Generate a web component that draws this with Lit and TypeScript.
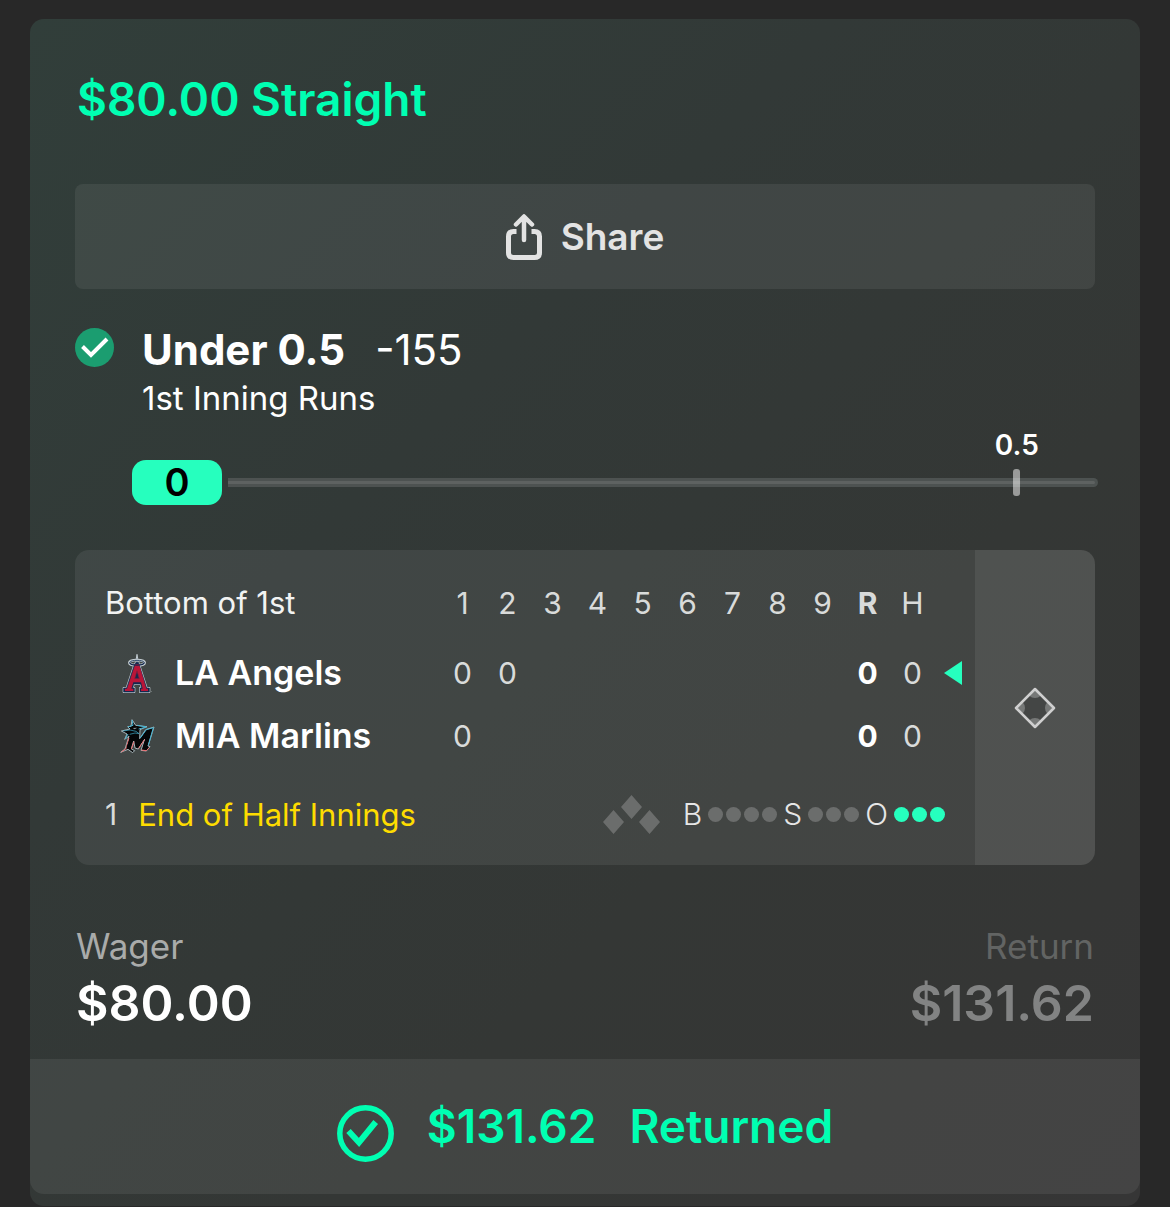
import { LitElement, css, html, svg } from "lit";
import { customElement, property } from "lit/decorators.js";
import { classMap } from "lit/directives/class-map.js";

type Team = {
  name: string;
  logo: unknown;
  innings: string[];
  runs: number;
  hits: number;
  batting: boolean;
};

const angelsLogo = html`
  <svg class="logo" viewBox="0 0 102 120" aria-hidden="true">
    <g stroke-linejoin="round">
      <path d="M48 4 L51 22 H45 Z" fill="#14294f" stroke="#c3ccd0" stroke-width="3" />
      <ellipse cx="48" cy="29" rx="23" ry="8" fill="none" stroke="#c3ccd0" stroke-width="8" />
      <path
        d="M45 28 H52 L77 105 H85 V117 H57 V105 H62 L59 93 H38 L35 105 H40 V117 H8 V105 H17 L39 39 Z"
        fill="#14294f"
        stroke="#c3ccd0"
        stroke-width="6"
      />
      <path
        d="M45 28 H52 L77 105 H85 V117 H57 V105 H62 L59 93 H38 L35 105 H40 V117 H8 V105 H17 L39 39 Z"
        fill="#14294f"
        stroke="#14294f"
        stroke-width="2"
      />
      <path
        d="M43 33 H54 L76 107 H81 V114 H60 V107 H65 L60 88 H37 L31 107 H37 V114 H12 V107 H18 Z"
        fill="#b91538"
      />
      <path d="M48 53 L55 77 H41 Z" fill="#14294f" stroke="#8f1d39" stroke-width="2" />
      <path d="M26 28 C28 39 68 39 70 28" fill="none" stroke="#14294f" stroke-width="4" />
      <path d="M26 28 C29 20 67 20 70 28" fill="none" stroke="#304969" stroke-width="3" />
      <circle cx="92" cy="116" r="1" fill="#c3ccd0" />
    </g>
  </svg>
`;

const marlinsLogo = html`
  <svg class="logo" viewBox="0 -4 108 112" aria-hidden="true">
    <g stroke-linejoin="round">
      <path
        d="M2 101 L15 91 L27 52 L14 62 L21 46 L4 37 L30 31 L23 24 L33 23 L36 3 L47 20 L81 24 L60 33 L59 60 L77 33 L102 25 L97 41 L84 82 L90 84 L79 97 L63 95 L74 61 L55 91 L45 88 L41 67 L34 91 L44 96 L38 102 L24 92 Z"
        fill="#050607"
        stroke="#a6b5ba"
        stroke-width="3"
      />
      <path d="M36 4 L39 20 L24 25 M52 20 L79 25 L56 31 M61 58 L79 33 L100 27 L85 80 M16 60 L24 46" fill="none" stroke="#43b4d3" stroke-width="3" />
      <path d="M4 100 L18 90 L27 58 M34 91 L42 69 M56 89 L74 62 M64 94 L79 96 L89 86" fill="none" stroke="#ee6f72" stroke-width="3" />
      <path d="M9 37 L30 34 L48 38 L57 45 L45 43 L29 47" fill="none" stroke="#43b4d3" stroke-width="2" />
      <path d="M38 28 L52 27 L44 32 Z" fill="#82949c" />
      <path d="M36 52 L23 88 M48 50 L53 80 L83 40 M87 40 L73 86" fill="none" stroke="#050607" stroke-width="8" />
    </g>
  </svg>
`;

@customElement("stat-tracker")
export class StatTracker extends LitElement {
  @property({ type: Number }) value = 0;
  @property({ type: Number }) line = 0.5;

  static styles = css`
    :host {
      display: block;
    }
    .tracker {
      position: relative;
      display: flex;
      align-items: center;
      gap: 6px;
      height: 45px;
    }
    .pill {
      width: 90px;
      height: 45px;
      border-radius: 14px;
      background: #26ffbe;
      color: #000;
      font-size: 38px;
      font-weight: 600;
      line-height: 45px;
      text-align: center;
    }
    .track {
      flex: 1;
      height: 9px;
      border-radius: 0 5px 5px 0;
      box-sizing: border-box;
      padding: 3px 3px 3px 0;
      background: #4d5251;
    }
    .track-line {
      height: 3px;
      background: #5e6261;
      border-radius: 0 2px 2px 0;
    }
    .target {
      position: absolute;
      bottom: 9px;
      display: flex;
      flex-direction: column;
      align-items: center;
      gap: 9px;
      transform: translateX(-50%);
      color: #fff;
      font-size: 28px;
      font-weight: 600;
      line-height: 30px;
    }
    .tick {
      width: 7px;
      height: 27px;
      border-radius: 3px;
      background: rgba(255, 255, 255, 0.5);
    }
  `;

  render() {
    // the scale runs a little past the line
    const left = 91.6 * (this.line / 0.5);
    return html`
      <div class="tracker" role="meter" aria-label="Runs" aria-valuemin="0" aria-valuemax=${this.line} aria-valuenow=${this.value}>
        <span class="pill">${this.value}</span>
        <div class="track"><div class="track-line"></div></div>
        <div class="target" style="left: ${left}%">
          <span>${this.line}</span>
          <span class="tick"></span>
        </div>
      </div>
    `;
  }
}

@customElement("score-board")
export class ScoreBoard extends LitElement {
  @property({ attribute: false }) teams: Team[] = [];

  static styles = css`
    :host {
      display: flex;
      border-radius: 14px;
      overflow: hidden;
      background: rgba(255, 255, 255, 0.07);
    }
    .main {
      flex: 1;
      min-width: 0;
      padding-top: 14px;
    }
    table {
      width: 100%;
      table-layout: fixed;
      border-collapse: collapse;
      font-size: 30px;
      line-height: 36px;
      color: #d9dbda;
    }
    th,
    td {
      padding: 0;
      font-weight: 400;
      text-align: center;
      vertical-align: middle;
    }
    .inning {
      width: 45px;
    }
    .arrow {
      width: 40px;
    }
    thead tr {
      height: 77px;
    }
    tbody tr {
      height: 63px;
    }
    .period {
      padding-left: 30px;
      font-size: 31px;
      text-align: left;
      color: #f2f3f2;
    }
    .team {
      display: flex;
      align-items: center;
      gap: 19px;
      padding-left: 45px;
      font-size: 34px;
      font-weight: 600;
      color: #fff;
      white-space: nowrap;
    }
    .logo {
      display: block;
      width: 36px;
      height: 40px;
    }
    .runs {
      font-weight: 700;
    }
    td.runs {
      color: #fff;
    }
    .batting {
      display: block;
      width: 18px;
      height: 24px;
      margin-left: 9px;
      fill: #26ffbe;
    }
    .status {
      display: flex;
      align-items: center;
      height: 60px;
      padding: 17px 30px 21px;
      font-size: 30px;
      color: #d9dbda;
    }
    .play {
      flex: 1;
      margin-left: 21px;
      font-size: 31px;
      color: #fedc00;
    }
    .bases {
      width: 57px;
      height: 39px;
      margin-right: 23px;
      fill: #6b6d6c;
    }
    .count {
      display: flex;
      align-items: center;
      gap: 6px;
      font-weight: 300;
      color: #e6e6e6;
    }
    .dots {
      display: flex;
      gap: 3px;
    }
    .dot {
      width: 15px;
      height: 15px;
      border-radius: 50%;
      background: #6b6d6c;
    }
    .dot.on {
      background: #26ffbe;
    }
    .field {
      display: flex;
      align-items: center;
      justify-content: center;
      width: 120px;
      padding: 0;
      border: 0;
      background: rgba(255, 255, 255, 0.07);
      cursor: pointer;
    }
    .field svg {
      width: 42px;
      height: 42px;
    }
  `;

  dots(total: number, on: number) {
    return html`<span class="dots">
      ${Array.from({ length: total }, (_, i) => html`<span class=${classMap({ dot: true, on: i < on })}></span>`)}
    </span>`;
  }

  teamRow(team: Team) {
    return html`
      <tr>
        <th scope="row"><div class="team">${team.logo} ${team.name}</div></th>
        ${Array.from({ length: 9 }, (_, i) => html`<td>${team.innings[i] ?? ""}</td>`)}
        <td class="runs">${team.runs}</td>
        <td>${team.hits}</td>
        <td>
          ${team.batting
            ? html`<svg class="batting" viewBox="0 0 18 24" aria-hidden="true"><path d="M0 12 L18 0 V24 Z" /></svg>`
            : ""}
        </td>
      </tr>
    `;
  }

  render() {
    const corners = [
      [21, 3],
      [39, 21],
      [21, 39],
      [3, 21],
    ];
    return html`
      <div class="main">
        <table>
          <thead>
            <tr>
              <th class="period" scope="col">Bottom of 1st</th>
              ${[1, 2, 3, 4, 5, 6, 7, 8, 9].map((n) => html`<th class="inning" scope="col">${n}</th>`)}
              <th class="inning runs" scope="col">R</th>
              <th class="inning" scope="col">H</th>
              <td class="arrow"></td>
            </tr>
          </thead>
          <tbody>
            ${this.teams.map((team) => this.teamRow(team))}
          </tbody>
        </table>
        <div class="status">
          <span>1</span>
          <span class="play">End of Half Innings</span>
          <svg class="bases" viewBox="0 0 57 39" aria-hidden="true">
            <path d="M28.500 0 L39 12 L28.500 24 L18 12 Z M10.500 15 L21 27 L10.500 39 L0 27 Z M46.500 15 L57 27 L46.500 39 L36 27 Z" />
          </svg>
          <div class="count">
            <span>B</span>${this.dots(4, 0)} <span>S</span>${this.dots(3, 0)} <span>O</span>${this.dots(3, 3)}
          </div>
        </div>
      </div>
      <button class="field" type="button" aria-label="Field view">
        <svg viewBox="0 0 42 42" aria-hidden="true">
          <clipPath id="infield"><path d="M21 2 L40 21 L21 40 L2 21 Z" /></clipPath>
          <g clip-path="url(#infield)">
            <rect width="42" height="42" fill="#444645" />
            ${corners.map(([x, y]) => svg`<circle cx=${x} cy=${y} r="8" fill="#767877" />`)}
          </g>
          <path d="M21 2 L40 21 L21 40 L2 21 Z" fill="none" stroke="#cfcfcf" stroke-width="2.500" stroke-linejoin="round" />
        </svg>
      </button>
    `;
  }
}

@customElement("app-root")
export class AppRoot extends LitElement {
  teams: Team[] = [
    { name: "LA Angels", logo: angelsLogo, innings: ["0", "0"], runs: 0, hits: 0, batting: true },
    { name: "MIA Marlins", logo: marlinsLogo, innings: ["0"], runs: 0, hits: 0, batting: false },
  ];

  static styles = css`
    :host {
      display: block;
      box-sizing: border-box;
      min-height: 100vh;
      padding: 19px 30px 1px;
      background: #282828;
      color: #fff;
      font-family: Inter, "Liberation Sans", sans-serif;
    }
    .card {
      border-radius: 14px;
      padding-bottom: 12px;
      background: linear-gradient(135deg, #313e3a 0%, #323937 35%, #343735 65%, #353635 85%, #363636 100%);
    }
    .content {
      padding: 0 45px;
    }
    h1 {
      margin: 0;
      padding: 52px 2px 57px;
      font-size: 46px;
      font-weight: 600;
      line-height: 56px;
      color: #00ffb2;
    }
    .share {
      display: flex;
      align-items: center;
      justify-content: center;
      gap: 19px;
      width: 100%;
      height: 105px;
      padding: 0;
      border: 0;
      border-radius: 8px;
      background: rgba(255, 255, 255, 0.07);
      color: #e3e3e3;
      font: 600 37px/44px Inter, "Liberation Sans", sans-serif;
      cursor: pointer;
    }
    .share svg {
      width: 36px;
      height: 46px;
    }
    .pick {
      display: flex;
      gap: 28px;
      padding-top: 39px;
    }
    .badge {
      width: 39px;
      height: 39px;
    }
    h2 {
      display: flex;
      gap: 30px;
      margin: 0;
      font-size: 42px;
      font-weight: 700;
      line-height: 44px;
    }
    .odds {
      font-weight: 400;
    }
    .market {
      margin: 0;
      font-size: 33px;
      line-height: 52px;
    }
    stat-tracker {
      margin: 36px -3px 45px 57px;
    }
    .amounts {
      display: flex;
      justify-content: space-between;
      padding: 59px 1px 24px;
      margin: 0;
    }
    .returns {
      text-align: right;
    }
    dt {
      font-size: 35px;
      line-height: 44px;
      color: #a9abaa;
    }
    dd {
      margin: 0;
      padding-top: 3px;
      font-size: 50px;
      font-weight: 600;
      line-height: 64px;
    }
    .returns dt {
      color: #626463;
    }
    .returns dd {
      color: #828383;
    }
    .result {
      display: flex;
      align-items: flex-start;
      justify-content: center;
      gap: 33px;
      padding: 46px 0 32px;
      border-radius: 0 0 14px 14px;
      background: rgba(255, 255, 255, 0.07);
      color: #00ffb2;
      font-size: 46px;
      font-weight: 600;
      line-height: 42px;
    }
    .result svg {
      width: 57px;
      height: 57px;
    }
  `;

  render() {
    return html`
      <main class="card">
        <div class="content">
          <h1>$80.00 Straight</h1>
          <button class="share" type="button">
            <svg viewBox="0 0 36 46" fill="none" stroke="currentColor" stroke-linecap="round" stroke-linejoin="round" aria-hidden="true">
              <path stroke-width="5" stroke-linecap="butt" d="M10.500 17.500 H7.500 Q2.500 17.500 2.500 22.500 V38.500 Q2.500 43.500 7.500 43.500 H28.500 Q33.500 43.500 33.500 38.500 V22.500 Q33.500 17.500 28.500 17.500 H25.500" />
              <path stroke-width="4.500" d="M18 26 V3 M10 10.500 L18 2.500 L26 10.500" />
            </svg>
            Share
          </button>
          <section class="pick">
            <svg class="badge" viewBox="0 0 39 39" role="img" aria-label="Won">
              <circle cx="19.500" cy="19.500" r="19.500" fill="#1b9d70" />
              <path d="M7.500 18.500 L16 27 L32 11" fill="none" stroke="#fff" stroke-width="4" />
            </svg>
            <div>
              <h2>Under 0.5 <span class="odds">-155</span></h2>
              <p class="market">1st Inning Runs</p>
            </div>
          </section>
          <stat-tracker .value=${0} .line=${0.5}></stat-tracker>
          <score-board .teams=${this.teams}></score-board>
          <dl class="amounts">
            <div>
              <dt>Wager</dt>
              <dd>$80.00</dd>
            </div>
            <div class="returns">
              <dt>Return</dt>
              <dd>$131.62</dd>
            </div>
          </dl>
        </div>
        <footer class="result">
          <svg viewBox="0 0 57 57" fill="none" stroke="currentColor" aria-hidden="true">
            <circle cx="28.500" cy="28.500" r="25.700" stroke-width="5.500" />
            <path d="M11.500 26 L22 37.500 L38.700 17" stroke-width="6" />
          </svg>
          <span>$131.62</span>
          <span>Returned</span>
        </footer>
      </main>
    `;
  }
}
